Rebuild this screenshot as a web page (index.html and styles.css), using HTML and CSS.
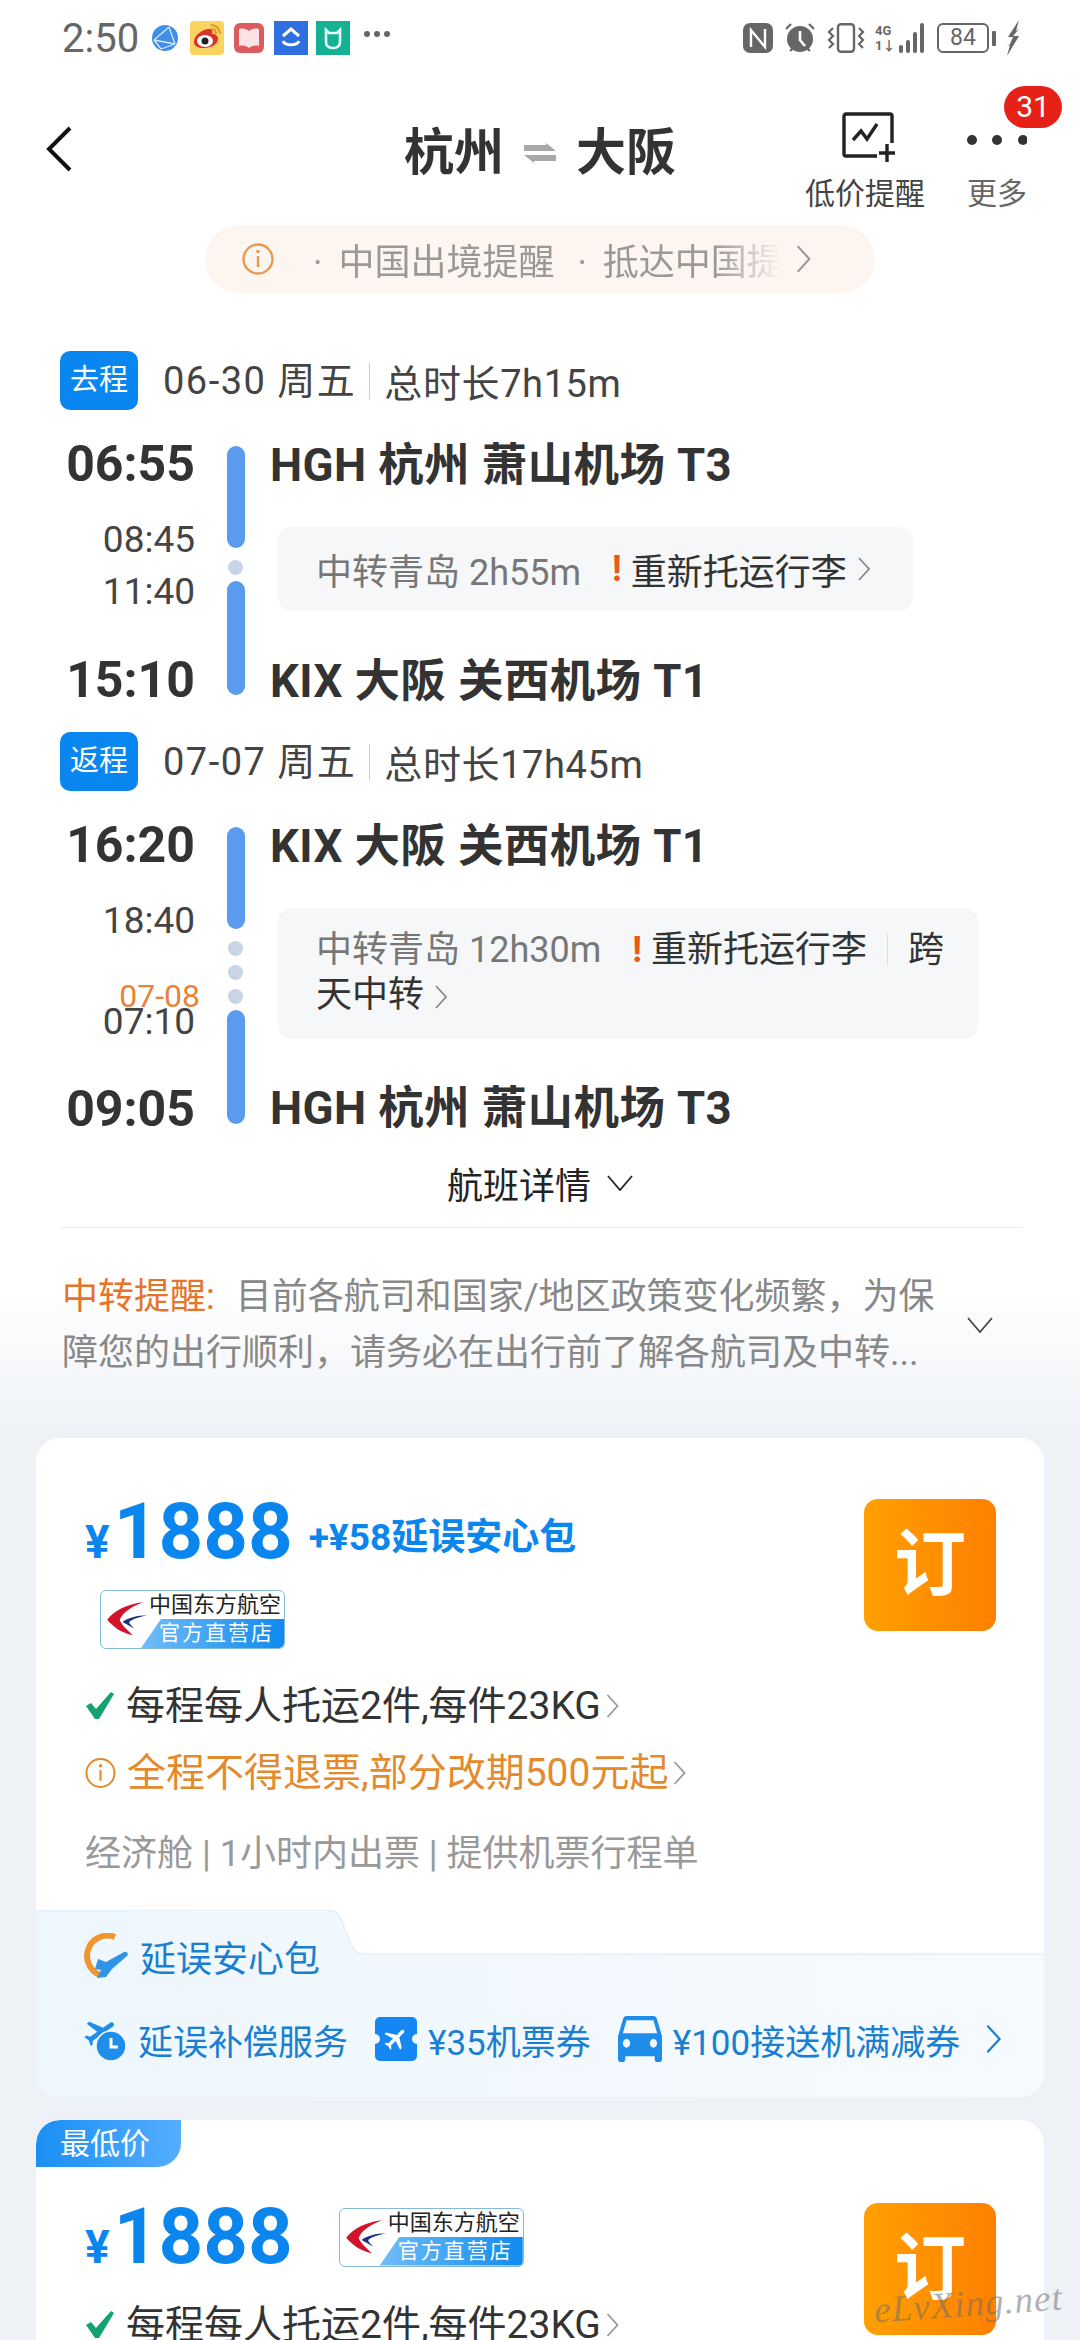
FILE: index.html
```html
<!DOCTYPE html>
<html lang="zh-CN">
<head>
    <meta charset="UTF-8">
    <meta name="viewport" content="width=device-width, initial-scale=1.0">
    <title>杭州 - 大阪</title>
    <link rel="stylesheet" href="styles.css">
</head>
<body>
    <svg class="defs" width="0" height="0">
        <symbol id="chev" viewBox="0 0 14 24"><path d="M2 1l10 11L2 23" fill="none" stroke="currentColor" stroke-width="1.8"/></symbol>
        <symbol id="chev-down" viewBox="0 0 26 16"><path d="M1 1l12 14L25 1" fill="none" stroke="currentColor" stroke-width="1.8"/></symbol>
        <symbol id="plane" viewBox="0 0 24 24"><path d="M21 16v-2l-8-5V3.5c0-.83-.67-1.5-1.5-1.5S10 2.67 10 3.5V9l-8 5v2l8-2.5V19l-2 1.5V22l3.5-1 3.5 1v-1.5L13 19v-5.5l8 2.5z"/></symbol>
        <symbol id="swoosh" viewBox="0 0 60 50">
            <path d="M52 2C30 4 12 14 3 26c9 10 19 18 35 21-10-9-16-15-18-21C24 16 36 8 52 2z" fill="#d3132c"/>
            <path d="M58 20c-14 0-28 4-34 9 6 3 10 6 16 9-5-5-7-7-7-9 5-4 15-7 25-9z" fill="#1d2f80"/>
        </symbol>
        <symbol id="check" viewBox="0 0 30 30"><path d="M1 15l5-3 5 6L26 1l3 2-15 25h-4z" fill="#13a36f"/></symbol>
    </svg>

    <!-- status bar -->
    <div class="statusbar">
        <div class="status-left">
            <span class="clock">2:50</span>
            <svg class="st-globe" width="26" height="26" viewBox="0 0 26 26"><circle cx="13" cy="13" r="13" fill="#3f8fe9"/><path d="M2 15L17 2M17 2l6 17M23 19L9 24M9 24L2 15M2 15l21 4" stroke="#d7e9fb" stroke-width="1.3" fill="none"/></svg>
            <svg class="st-app" width="34" height="34" viewBox="0 0 34 34"><rect width="34" height="34" rx="4" fill="#fbd35f"/><path d="M4 21c0-7 9-13 15-13 3 0 4 2 3 5 4 0 6 2 6 5 0 5-7 9-14 9-6 0-10-2-10-6z" fill="#d8322a"/><ellipse cx="15" cy="20" rx="8" ry="6" fill="#fff"/><circle cx="15" cy="20" r="3.5" fill="#222"/><path d="M21 4c5 0 9 4 9 9M21 8c3 0 5 2 5 5" stroke="#e8912a" stroke-width="2" fill="none"/></svg>
            <svg class="st-book" width="30" height="30" viewBox="0 0 30 30"><rect width="30" height="30" rx="6" fill="#dd5a5e"/><path d="M5 6c4-1 8 0 10 2 2-2 6-3 10-2v17c-4-1-8 0-10 2-2-2-6-3-10-2z" fill="#fde3e6"/></svg>
            <svg class="st-app" width="34" height="34" viewBox="0 0 34 34"><rect width="34" height="34" fill="#2f6fdf"/><path d="M9 15l8-7 8 7" stroke="#fff" stroke-width="3" fill="none"/><path d="M9 20c2 5 14 5 16 0" stroke="#fff" stroke-width="3" fill="none"/></svg>
            <svg class="st-app" width="34" height="34" viewBox="0 0 34 34"><rect width="34" height="34" fill="#14b292"/><path d="M10 9l3 3h8l3-3v12c0 4-3 6-7 6s-7-2-7-6z" stroke="#e8fbf6" stroke-width="2.6" fill="none"/></svg>
            <span class="st-more"><i></i><i></i><i></i></span>
        </div>
        <div class="status-right">
            <svg width="30" height="30" viewBox="0 0 30 30"><rect width="30" height="30" rx="7" fill="#666"/><path d="M8 24V7l14 17V6" stroke="#fff" stroke-width="2.4" fill="none"/></svg>
            <svg class="st-alarm" width="32" height="32" viewBox="0 0 32 32"><circle cx="16" cy="17" r="13" fill="#666"/><path d="M16 9v9l5 6" stroke="#fff" stroke-width="2.6" fill="none"/><path d="M2 7l5-5M30 7l-5-5M6 29l3-3M26 29l-3-3" stroke="#666" stroke-width="2.2"/></svg>
            <svg class="st-vib" width="38" height="30" viewBox="0 0 38 30"><rect x="11" y="1.2" width="16" height="27.6" rx="3" fill="none" stroke="#666" stroke-width="2.4"/><path d="M6 5L2 9l4 4-4 4 4 4-4 4M32 5l4 4-4 4 4 4-4 4 4 4" fill="none" stroke="#666" stroke-width="2.2"/></svg>
            <span class="st-signal">
                <span class="net"><b>4G</b><b>1↓</b></span>
                <span class="bars"><i class="b1"></i><i class="b2"></i><i class="b3"></i><i class="b4"></i></span>
            </span>
            <span class="battery"><span class="cell">84</span><i class="nub"></i></span>
            <svg width="14" height="36" viewBox="0 0 14 36"><path d="M13 0L2 17h5L4 24l-3 3 3-2-3 11L13 16H7l6-7-3 2z" fill="#666"/></svg>
        </div>
    </div>

    <!-- header -->
    <div class="topbar">
        <div class="back">
            <svg width="26" height="46" viewBox="0 0 26 46"><path d="M24 2L3 23l21 21" fill="none" stroke="#111" stroke-width="4"/></svg>
        </div>
        <div class="route">
            <span>杭州</span>
            <svg width="36" height="20" viewBox="0 0 36 20"><path d="M2 2h22V0l10 8H2zM34 18H12v2L2 12h32z" fill="#a8a8a8"/></svg>
            <span>大阪</span>
        </div>
        <div class="actions">
            <div class="action">
                <svg width="60" height="50" viewBox="0 0 60 50"><path d="M42 44H11a2 2 0 0 1-2-2V4a2 2 0 0 1 2-2h44a2 2 0 0 1 2 2v27" fill="none" stroke="#222" stroke-width="3.4"/><path d="M18 28l8-9 6 8 10-15" fill="none" stroke="#222" stroke-width="3.4"/><path d="M52 32v18M44 41h16" stroke="#222" stroke-width="3.4"/></svg>
                <span>低价提醒</span>
            </div>
            <div class="action more">
                <svg width="60" height="50" viewBox="0 0 60 50"><circle cx="5" cy="28" r="5" fill="#333"/><circle cx="30" cy="28" r="5" fill="#333"/><circle cx="56" cy="28" r="5" fill="#333"/></svg>
                <span>更多</span>
                <b class="badge">31</b>
            </div>
        </div>
    </div>

    <div class="notice">
        <svg width="32" height="32" viewBox="0 0 32 32"><circle cx="16" cy="16" r="14.5" fill="none" stroke="#e79a4f" stroke-width="2.4"/><path d="M16 13v11" stroke="#e79a4f" stroke-width="2.4"/><circle cx="16" cy="8.5" r="1.8" fill="#e79a4f"/></svg>
        <div class="notice-text"><span class="bullet">·</span>中国出境提醒<span class="bullet bullet-next">·</span>抵达中国提醒</div>
        <svg class="notice-chev" width="17" height="28"><use href="#chev"/></svg>
    </div>

    <!-- outbound -->
    <div class="trip">
        <div class="trip-head">
            <span class="trip-tag">去程</span>
            <span class="trip-date">06-30 周五</span>
            <span class="trip-total">总时长7h15m</span>
        </div>
        <div class="leg">
            <div class="times">
                <b class="t-main">06:55</b>
                <span class="t-sub t-first">08:45</span>
                <span class="t-sub t-next">11:40</span>
                <b class="t-main t-arr">15:10</b>
            </div>
            <div class="rail">
                <i class="bar bar-a"></i>
                <i class="dot dot-first"></i>
                <i class="bar bar-b"></i>
            </div>
            <div class="info">
                <b class="airport">HGH 杭州 萧山机场 T3</b>
                <div class="transfer">
                    中转青岛 2h55m<b class="warn">!</b><span class="dark">重新托运行李</span><svg class="tr-chev" width="14" height="24"><use href="#chev"/></svg>
                </div>
                <b class="airport ap-arr">KIX 大阪 关西机场 T1</b>
            </div>
        </div>
    </div>

    <!-- return -->
    <div class="trip trip-back">
        <div class="trip-head">
            <span class="trip-tag">返程</span>
            <span class="trip-date">07-07 周五</span>
            <span class="trip-total">总时长17h45m</span>
        </div>
        <div class="leg">
            <div class="times">
                <b class="t-main">16:20</b>
                <span class="t-sub t-first">18:40</span>
                <span class="t-day">07-08</span>
                <span class="t-sub t-after-day">07:10</span>
                <b class="t-main t-arr2">09:05</b>
            </div>
            <div class="rail">
                <i class="bar bar-a"></i>
                <i class="dot dot-first"></i>
                <i class="dot dot-next"></i>
                <i class="dot dot-next"></i>
                <i class="bar bar-b"></i>
            </div>
            <div class="info">
                <b class="airport">KIX 大阪 关西机场 T1</b>
                <div class="transfer transfer-long">
                    中转青岛 12h30m<b class="warn">!</b><span class="dark">重新托运行李</span><i class="sep"></i><span class="dark">跨天中转</span><svg class="tr-chev" width="14" height="24"><use href="#chev"/></svg>
                </div>
                <b class="airport ap-arr2">HGH 杭州 萧山机场 T3</b>
            </div>
        </div>
    </div>

    <div class="details">航班详情<svg width="26" height="16"><use href="#chev-down"/></svg></div>
    <div class="divider"></div>

    <div class="reminder">
        <p><em>中转提醒:</em>目前各航司和国家/地区政策变化频繁，为保<br>障您的出行顺利，请务必在出行前了解各航司及中转...</p>
        <svg width="26" height="16"><use href="#chev-down"/></svg>
    </div>

    <!-- offers -->
    <div class="card">
        <div class="offer">
            <div class="offer-main">
                <div class="price-row">
                    <span class="price"><small>¥</small>1888</span>
                    <b class="addon">+¥58延误安心包</b>
                </div>
                <div class="airline airline-below">
                    <svg class="swoosh" width="44" height="40"><use href="#swoosh"/></svg>
                    <div class="airline-text">
                        <span class="airline-name">中国东方航空</span>
                        <span class="airline-strip">官方直营店</span>
                    </div>
                </div>
                <div class="perk perk-first">
                    <svg width="30" height="30"><use href="#check"/></svg>
                    每程每人托运2件,每件23KG<svg class="perk-chev" width="15" height="24"><use href="#chev"/></svg>
                </div>
                <div class="perk perk-warn">
                    <svg width="31" height="32" viewBox="0 0 32 32"><circle cx="16" cy="16" r="14.5" fill="none" stroke="#e58a2c" stroke-width="2"/><path d="M16 13v11" stroke="#e58a2c" stroke-width="2.2"/><circle cx="16" cy="8.5" r="1.7" fill="#e58a2c"/></svg>
                    全程不得退票,部分改期500元起<svg class="perk-chev" width="15" height="24"><use href="#chev"/></svg>
                </div>
                <div class="cabin">经济舱 | 1小时内出票 | 提供机票行程单</div>
            </div>
            <div class="book">订</div>
        </div>
        <div class="bundle">
            <svg class="bundle-bg" width="1008" height="187" viewBox="0 0 1008 187">
                <defs><linearGradient id="bundleFill" x1="0" y1="0" x2="1" y2="0"><stop offset="0" stop-color="#eef7fd"/><stop offset="1" stop-color="#f6fafe"/></linearGradient></defs>
                <path d="M0 0H290c12 0 14 6 17 14l8 20c3 8 7 10 15 10H1008V187H0z" fill="url(#bundleFill)"/>
                <path d="M0 0H290c12 0 14 6 17 14l8 20c3 8 7 10 15 10H1008" fill="none" stroke="#e3eff7" stroke-width="1.5"/>
            </svg>
            <div class="bundle-title">
                <svg width="48" height="46" viewBox="0 0 48 46"><path d="M33 4A20 20 0 0 0 18 42" fill="none" stroke="#ef962f" stroke-width="6"/><path d="M16 26l8 3 18-10c3-1 5 2 3 4L30 36l-6 8-9 1 4-8-6-1z" fill="#2f93e6"/></svg>
                <span>延误安心包</span>
            </div>
            <div class="bundle-row">
                <svg width="45" height="46" viewBox="0 0 45 46"><use href="#plane" x="0" y="-2" width="38" height="38" transform="rotate(55 19 17)" fill="#1f8dea"/><circle cx="29" cy="30" r="15" fill="#1f8dea" stroke="#f1f8fd" stroke-width="1.5"/><path d="M29 22v9h7" fill="none" stroke="#fff" stroke-width="3"/></svg>
                <span class="bundle-text">延误补偿服务</span>
                <svg class="b-icon" width="42" height="44" viewBox="0 0 42 44"><path d="M5 0h32a5 5 0 0 1 5 5v12a5 5 0 0 0 0 10v12a5 5 0 0 1-5 5H5a5 5 0 0 1-5-5V27a5 5 0 0 0 0-10V5a5 5 0 0 1 5-5z" fill="#1487f2"/><use href="#plane" x="7" y="8" width="28" height="28" transform="rotate(45 21 22)" fill="#fff"/></svg>
                <span class="bundle-text">¥35机票券</span>
                <svg class="b-icon" width="44" height="46" viewBox="3 5 18 16" preserveAspectRatio="none"><path d="M18.92 6.01C18.72 5.42 18.16 5 17.5 5h-11c-.66 0-1.21.42-1.42 1.01L3 12v8c0 .55.45 1 1 1h1c.55 0 1-.45 1-1v-1h12v1c0 .55.45 1 1 1h1c.55 0 1-.45 1-1v-8l-2.08-5.99zM6.5 16c-.83 0-1.5-.67-1.5-1.5S5.67 13 6.5 13s1.5.67 1.5 1.5S7.33 16 6.5 16zm11 0c-.83 0-1.5-.67-1.5-1.5s.67-1.5 1.5-1.5 1.5.67 1.5 1.5-.67 1.5-1.5 1.5zM5 11l1.5-4.5h11L19 11H5z" fill="#1f8dea"/></svg>
                <span class="bundle-text">¥100接送机满减券</span>
                <svg class="bundle-chev" width="17" height="30"><use href="#chev"/></svg>
            </div>
        </div>
    </div>

    <div class="card card-low">
        <span class="low-tag">最低价</span>
        <div class="offer">
            <div class="offer-main">
                <div class="price-row">
                    <span class="price"><small>¥</small>1888</span>
                    <div class="airline airline-inline">
                        <svg class="swoosh" width="44" height="40"><use href="#swoosh"/></svg>
                        <div class="airline-text">
                            <span class="airline-name">中国东方航空</span>
                            <span class="airline-strip">官方直营店</span>
                        </div>
                    </div>
                </div>
                <div class="perk perk-low">
                    <svg width="30" height="30"><use href="#check"/></svg>
                    每程每人托运2件,每件23KG<svg class="perk-chev" width="15" height="24"><use href="#chev"/></svg>
                </div>
            </div>
            <div class="book">订</div>
        </div>
    </div>

    <div class="watermark">eLvXing.net</div>
</body>
</html>
```

FILE: styles.css
```css
* {
    box-sizing: border-box;
}

html, body {
    margin: 0;
    padding: 0;
}

body {
    width: 1080px;
    height: 2340px;
    overflow: hidden;
    position: relative;
    background: linear-gradient(#fff 1290px, #eef2f7 1430px);
    color: #333;
    font-family: Roboto, "Noto Sans CJK SC", sans-serif;
}

.defs {
    position: absolute;
}

svg {
    flex: none;
    display: block;
}

/* status bar */
.statusbar {
    height: 80px;
    display: flex;
    justify-content: space-between;
    align-items: center;
    padding: 0 60px 4px 62px;
}

.status-left, .status-right {
    display: flex;
    align-items: center;
}

.clock {
    font-size: 40px;
    color: #666;
    width: 90px;
}

.st-app {
    margin-right: 8px;
}

.st-globe {
    margin-right: 12px;
}

.st-book {
    margin: 0 10px 0 2px;
}

.st-more {
    display: flex;
    gap: 4px;
    margin: -8px 0 0 6px;
}

.st-more i {
    width: 6px;
    height: 6px;
    border-radius: 50%;
    background: #666;
}

.status-right > svg:first-child {
    margin-right: 11px;
}

.st-alarm {
    margin-right: 11px;
}

.st-vib {
    margin-right: 10px;
}

.st-signal {
    display: flex;
    align-items: flex-end;
    height: 30px;
    margin-right: 13px;
}

.net {
    display: flex;
    flex-direction: column;
    font-size: 13px;
    line-height: 15px;
    color: #666;
    width: 24px;
}

.net b {
    font-weight: 700;
}

.bars {
    display: flex;
    align-items: flex-end;
    gap: 3px;
}

.bars i {
    width: 4px;
    background: #666;
    border-radius: 2px;
}

.b1 { height: 8px; }
.b2 { height: 13px; }
.b3 { height: 21px; }
.b4 { height: 30px; }

.battery {
    display: flex;
    align-items: center;
    margin-right: 10px;
}

.cell {
    width: 52px;
    height: 30px;
    border: 2.4px solid #666;
    border-radius: 6px;
    font-size: 23px;
    line-height: 25px;
    text-align: center;
    color: #666;
}

.nub {
    width: 4px;
    height: 15px;
    margin-left: 3px;
    background: #666;
    border-radius: 1px;
}

/* header */
.topbar {
    height: 145px;
    display: grid;
    grid-template-columns: 1fr auto 1fr;
    align-items: start;
}

.back {
    padding: 46px 0 0 46px;
}

.route {
    display: flex;
    align-items: center;
    gap: 18px;
    margin-top: 43px;
    font-size: 50px;
    line-height: 60px;
    font-weight: 700;
}

.actions {
    display: flex;
    justify-content: flex-end;
    gap: 42px;
    padding: 32px 53px 0 0;
}

.action {
    position: relative;
    display: flex;
    flex-direction: column;
    align-items: center;
    font-size: 30px;
    line-height: 40px;
    color: #444;
    gap: 12px;
}

.action.more {
    color: #666;
    width: 60px;
}

.badge {
    position: absolute;
    top: -26px;
    left: 37px;
    width: 58px;
    height: 42px;
    border-radius: 21px;
    background: #e62117;
    color: #fff;
    font-size: 30px;
    line-height: 42px;
    font-weight: 400;
    text-align: center;
}

.notice {
    width: 670px;
    height: 68px;
    margin-left: 205px;
    padding-left: 37px;
    display: flex;
    align-items: center;
    border-radius: 34px;
    background: #fdf6f0;
}

.notice-text {
    width: 468px;
    margin-left: 39px;
    font-size: 36px;
    color: #999;
    white-space: nowrap;
    overflow: hidden;
    -webkit-mask-image: linear-gradient(to right, #000 86%, transparent 100%);
    mask-image: linear-gradient(to right, #000 86%, transparent 100%);
}

.bullet {
    margin-right: 16px;
}

.bullet-next {
    margin-left: 23px;
}

.notice-chev {
    margin-left: 14px;
    color: #999;
}

/* itinerary */
.trip {
    padding: 58px 0 0 60px;
}

.trip-back {
    padding-top: 30px;
}

.trip-head {
    display: flex;
    align-items: center;
    height: 59px;
}

.trip-tag {
    width: 78px;
    height: 59px;
    border-radius: 10px;
    background: #0a86f0;
    color: #fff;
    font-size: 29px;
    line-height: 59px;
    text-align: center;
}

.trip-date {
    margin-left: 25px;
    padding-right: 13px;
    border-right: 1px solid #ccc;
    font-size: 38px;
    line-height: 36px;
    letter-spacing: 1.5px;
    color: #444;
    white-space: nowrap;
}

.trip-total {
    margin-left: 14px;
    font-size: 38px;
    letter-spacing: .6px;
    color: #444;
    white-space: nowrap;
}

.leg {
    display: flex;
    margin-top: 34px;
}

.times {
    width: 135px;
    display: flex;
    flex-direction: column;
    align-items: flex-end;
    flex: none;
}

.t-main {
    font-size: 50px;
    line-height: 40px;
    font-weight: 700;
}

.t-sub {
    font-size: 37px;
    line-height: 40px;
    color: #444;
}

.t-first {
    margin-top: 36px;
}

.t-next {
    margin-top: 12px;
}

.t-arr {
    margin-top: 48px;
}

.t-day {
    margin: 42px -5px 0 0;
    font-size: 32px;
    line-height: 26px;
    color: #e5843a;
}

.t-after-day {
    line-height: 26px;
}

.t-arr2 {
    margin-top: 54px;
}

.rail {
    width: 75px;
    flex: none;
    padding: 2px 0 0 32px;
    display: flex;
    flex-direction: column;
}

.bar {
    width: 18px;
    border-radius: 9px;
    background: #5a9bf0;
}

.bar-a {
    height: 102px;
}

.bar-b {
    height: 114px;
    margin-top: 6px;
}

.dot {
    width: 15px;
    height: 15px;
    margin-left: 1px;
    border-radius: 50%;
    background: #c8d5e6;
}

.dot-first {
    margin-top: 12px;
}

.dot-next {
    margin-top: 9px;
}

.info {
    display: flex;
    flex-direction: column;
    align-items: flex-start;
}

.airport {
    padding-top: 2px;
    font-size: 45.5px;
    line-height: 40px;
    font-weight: 700;
    letter-spacing: .4px;
    white-space: nowrap;
}

.ap-arr {
    margin-top: 49px;
}

.ap-arr2 {
    margin-top: 48px;
}

.transfer {
    margin: 41px 0 0 8px;
    width: 635px;
    height: 84px;
    padding: 0 38px;
    display: flex;
    align-items: center;
    border-radius: 14px;
    background: #f6f7f9;
    font-size: 36px;
    color: #777;
    white-space: nowrap;
}

.transfer-long {
    display: block;
    width: 700px;
    height: 131px;
    padding: 20px 30px 0 38px;
    line-height: 45px;
    white-space: normal;
}

.transfer-long .tr-chev {
    display: inline-block;
    vertical-align: -2px;
}

.warn {
    margin: 0 9px 0 31px;
    color: #e8591a;
    font-weight: 700;
}

.dark {
    color: #333;
}

.tr-chev {
    margin-left: 10px;
    color: #888;
}

.sep {
    display: inline-block;
    width: 1px;
    height: 32px;
    margin: 0 20px;
    vertical-align: -4px;
    background: #ddd;
}

.details {
    margin-top: 32px;
    height: 44px;
    display: flex;
    justify-content: center;
    align-items: center;
    gap: 16px;
    font-size: 36px;
    color: #222;
}

.divider {
    margin: 22px 58px 0 60px;
    border-top: 1px solid #eaeaea;
}

.reminder {
    margin-top: 41px;
    padding: 0 87px 0 62px;
    display: flex;
    justify-content: space-between;
    align-items: center;
    color: #888;
    white-space: nowrap;
}

.reminder > svg {
    color: #444;
}

.reminder p {
    margin: 0;
    font-size: 36px;
    line-height: 56px;
}

.reminder em {
    font-style: normal;
    margin-right: 21px;
    color: #e5742a;
}

/* offer cards */
.card {
    position: relative;
    margin: 57px 36px 0;
    border-radius: 24px;
    background: #fff;
    overflow: hidden;
}

.card-low {
    margin-top: 23px;
    min-height: 300px;
    padding-top: 23px;
}

.offer {
    display: flex;
    justify-content: space-between;
    align-items: flex-start;
    padding: 59px 48px 0 49px;
}

.price-row {
    display: flex;
    align-items: center;
    height: 80px;
}

.price {
    font-size: 78px;
    line-height: 80px;
    font-weight: 700;
    color: #0a86ee;
}

.price small {
    font-size: 46px;
    margin-right: 4px;
}

.addon {
    margin: -6px 0 0 16px;
    font-size: 37px;
    color: #0a86ee;
    white-space: nowrap;
}

.airline {
    width: 185px;
    height: 59px;
    display: flex;
    border: 1.5px solid #86b9d9;
    border-radius: 6px;
    overflow: hidden;
    background: #fff;
}

.airline-below {
    margin: 13px 0 0 15px;
}

.airline-inline {
    margin: -10px 0 0 46px;
}

.swoosh {
    margin: 8px 0 0 4px;
}

.airline-text {
    display: flex;
    flex-direction: column;
    flex: 1;
    text-align: right;
    white-space: nowrap;
}

.airline-name {
    height: 28px;
    padding-right: 3px;
    font-size: 22px;
    line-height: 28px;
    color: #222;
}

.airline-strip {
    height: 29px;
    margin-left: -8px;
    padding-right: 10px;
    clip-path: polygon(20px 0, 100% 0, 100% 100%, 0 100%);
    background: linear-gradient(to right, #70bdf8, #0f8aee);
    color: #fff;
    font-size: 21px;
    line-height: 29px;
    letter-spacing: 2px;
}

.perk {
    height: 50px;
    display: flex;
    align-items: center;
    font-size: 39px;
    line-height: 50px;
    color: #333;
    white-space: nowrap;
}

.perk > svg:first-child {
    margin-right: 11px;
}

.perk-first {
    margin-top: 32px;
}

.perk-warn {
    margin-top: 17px;
    color: #e58a2c;
}

.perk-low {
    margin-top: 18px;
}

.perk-chev {
    margin-left: 4px;
    color: #999;
}

.cabin {
    margin-top: 31px;
    font-size: 36px;
    line-height: 50px;
    color: #999;
    white-space: nowrap;
}

.book {
    width: 132px;
    height: 132px;
    margin-top: 2px;
    flex: none;
    border-radius: 14px;
    background: linear-gradient(to right, #ffa000, #ff8000);
    color: #fff;
    font-size: 72px;
    line-height: 132px;
    font-weight: 700;
    text-align: center;
}

.card-low .book {
    margin-top: 1px;
}

.bundle {
    position: relative;
    height: 187px;
    margin-top: 31px;
    padding: 23px 42px 0 46px;
}

.bundle-bg {
    position: absolute;
    top: 0;
    left: 0;
}

.bundle-title, .bundle-row {
    position: relative;
    display: flex;
    align-items: center;
    height: 46px;
    white-space: nowrap;
}

.bundle-title {
    gap: 10px;
    font-size: 36px;
    color: #1a7fd0;
}

.bundle-row {
    margin-top: 37px;
    font-size: 35px;
    color: #1a7fd0;
}

.bundle-text {
    margin-left: 11px;
}

.b-icon {
    margin-left: 27px;
}

.bundle-chev {
    margin-left: auto;
    color: #1a7fd0;
}

.low-tag {
    position: absolute;
    top: 0;
    left: 0;
    width: 145px;
    height: 47px;
    padding-left: 24px;
    border-radius: 24px 0 24px 0;
    background: linear-gradient(to right, #1a8ff5, #55adff);
    color: #fff;
    font-size: 30px;
    line-height: 47px;
}

.watermark {
    position: absolute;
    top: 2282px;
    left: 874px;
    font-family: "Liberation Serif", serif;
    font-style: italic;
    font-size: 37px;
    letter-spacing: 1px;
    color: rgba(110, 110, 110, .55);
    transform: rotate(-4deg);
    white-space: nowrap;
}
```
